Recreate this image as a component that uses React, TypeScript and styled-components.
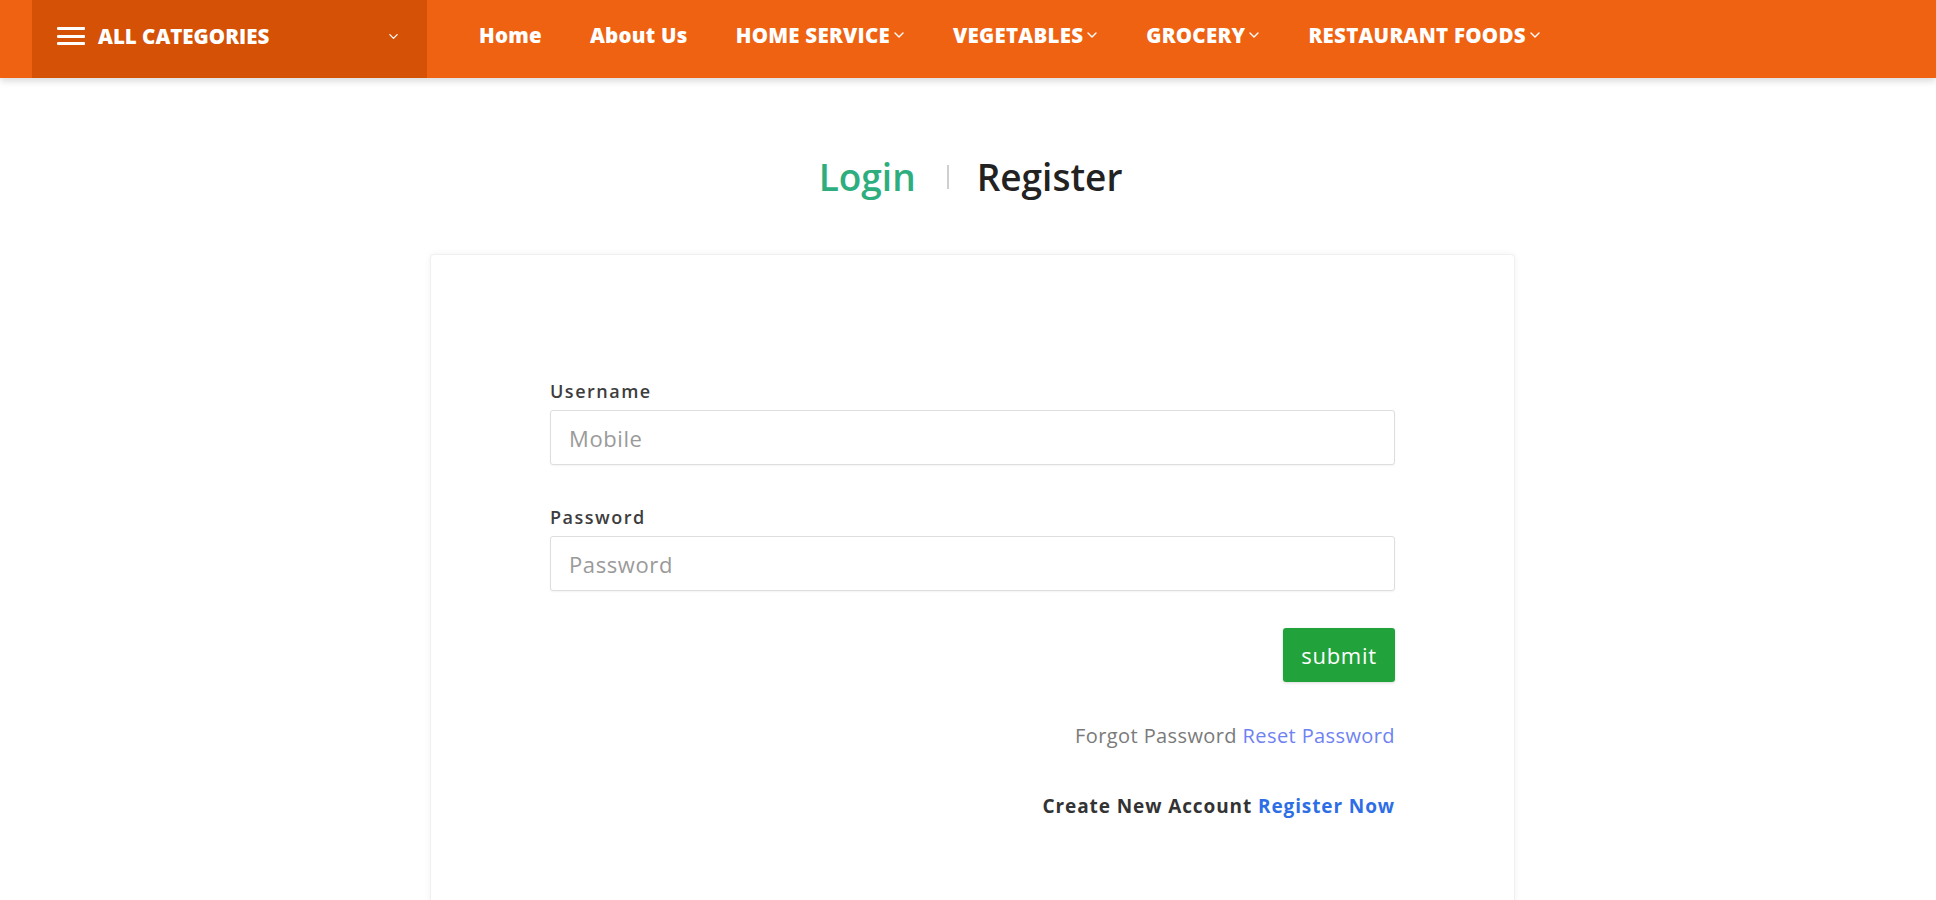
import React from "react";
import styled, { createGlobalStyle } from "styled-components";

const Global = createGlobalStyle`
  html, body { margin: 0; padding: 0; overflow: hidden; background: #ffffff; }
  body { font-family: "Open Sans", "Noto Sans", Arial, sans-serif; }
  * { box-sizing: border-box; }
`;

const Header = styled.header`
  height: 78px;
  background: #ee6212;
  display: flex;
  align-items: stretch;
  padding-left: 32px;
  box-shadow: 0 3px 7px rgba(0, 0, 0, 0.15);
  position: relative;
  z-index: 1;
`;

const CategoryBox = styled.div`
  width: 395px;
  background: #d45106;
  display: flex;
  align-items: center;
  padding: 0 28px 6px 25px;
  color: #fff;
`;

const Burger = styled.span`
  width: 28px;
  height: 18px;
  display: flex;
  flex-direction: column;
  justify-content: space-between;
  & > i {
    display: block;
    height: 3px;
    background: #fff;
    border-radius: 1px;
  }
`;

const CategoryText = styled.span`
  margin-left: 13px;
  font-size: 20.5px;
  font-weight: 800;
  flex: 1;
`;

const Nav = styled.nav`
  display: flex;
  align-items: center;
  gap: 48px;
  margin-left: 52px;
  padding-bottom: 8px;
`;

const NavItem = styled.a`
  display: flex;
  align-items: center;
  gap: 3px;
  color: #fff;
  font-size: 20.5px;
  font-weight: 800;
  letter-spacing: 0.25px;
  text-decoration: none;
  white-space: nowrap;
`;

const Chevron = ({ size = 12 }: { size?: number }) => (
  <svg width={size} height={size} viewBox="0 0 12 12" fill="none">
    <path d="M2 4l4 4 4-4" stroke="#fff" strokeWidth="1.4" strokeLinecap="round" strokeLinejoin="round" />
  </svg>
);

const Main = styled.main`
  display: flex;
  flex-direction: column;
  align-items: center;
  padding-left: 5px;
`;

const Tabs = styled.div`
  margin-top: 77px;
  display: flex;
  align-items: center;
  font-size: 37px;
  font-weight: 600;
  line-height: 43px;
`;

const Tab = styled.span<{ $active?: boolean }>`
  color: ${(p) => (p.$active ? "#2eae7e" : "#222")};
`;

const Sep = styled.span`
  width: 2px;
  height: 24px;
  background: #cfcfcf;
  margin: 0 28px 0 31px;
`;

const Card = styled.section`
  margin-top: 56px;
  margin-left: 4px;
  width: 1085px;
  min-height: 700px;
  background: #fff;
  border: 1px solid #f0f0f0;
  border-radius: 4px;
  box-shadow: 0 0 6px rgba(0, 0, 0, 0.06);
  padding: 125px 119px 80px;
`;

const Field = styled.div`
  display: flex;
  flex-direction: column;
  & + & {
    margin-top: 41px;
  }
`;

const Label = styled.label`
  font-size: 18px;
  font-weight: 600;
  letter-spacing: 1.5px;
  color: #3d3d3d;
  line-height: 22px;
  margin-bottom: 8px;
`;

const Input = styled.input`
  height: 55px;
  border: 1px solid #dedede;
  border-radius: 3px;
  padding: 0 18px;
  font-family: "Open Sans", Arial, sans-serif;
  font-size: 22px;
  letter-spacing: 0.6px;
  color: #444;
  box-shadow: 0 1px 2px rgba(0, 0, 0, 0.05);
  outline: none;
  &::placeholder {
    color: #9a9a9a;
  }
`;

const Actions = styled.div`
  display: flex;
  flex-direction: column;
  align-items: flex-end;
`;

const Submit = styled.button`
  margin-top: 37px;
  width: 112px;
  height: 54px;
  background: #22a23b;
  color: #fff;
  border: none;
  border-radius: 3px;
  font-family: "Open Sans", Arial, sans-serif;
  font-size: 22px;
  letter-spacing: 0.7px;
  box-shadow: 0 1px 3px rgba(0, 0, 0, 0.15);
`;

const Note = styled.p<{ $bold?: boolean }>`
  margin: ${(p) => (p.$bold ? "42px" : "40px")} 0 0;
  font-size: ${(p) => (p.$bold ? "19px" : "20px")};
  font-weight: ${(p) => (p.$bold ? 700 : 400)};
  color: ${(p) => (p.$bold ? "#333" : "#7a7a7a")};
  line-height: 28px;
  letter-spacing: ${(p) => (p.$bold ? "0.9px" : "0.4px")};
`;

const Link = styled.a<{ $bold?: boolean }>`
  color: ${(p) => (p.$bold ? "#2d6ee6" : "#6f82f2")};
  text-decoration: none;
`;

const navItems = [
  { label: "Home" },
  { label: "About Us" },
  { label: "HOME SERVICE", drop: true },
  { label: "VEGETABLES", drop: true },
  { label: "GROCERY", drop: true },
  { label: "RESTAURANT FOODS", drop: true },
];

export default function App() {
  return (
    <>
      <Global />
      <Header>
        <CategoryBox>
          <Burger>
            <i />
            <i />
            <i />
          </Burger>
          <CategoryText>ALL CATEGORIES</CategoryText>
          <Chevron size={11} />
        </CategoryBox>
        <Nav>
          {navItems.map((n) => (
            <NavItem key={n.label} href="#">
              {n.label}
              {n.drop && <Chevron size={12} />}
            </NavItem>
          ))}
        </Nav>
      </Header>
      <Main>
        <Tabs>
          <Tab $active>Login</Tab>
          <Sep />
          <Tab>Register</Tab>
        </Tabs>
        <Card>
          <Field>
            <Label>Username</Label>
            <Input placeholder="Mobile" />
          </Field>
          <Field>
            <Label>Password</Label>
            <Input type="password" placeholder="Password" />
          </Field>
          <Actions>
            <Submit>submit</Submit>
            <Note>
              Forgot Password <Link href="#">Reset Password</Link>
            </Note>
            <Note $bold>
              Create New Account <Link $bold href="#">Register Now</Link>
            </Note>
          </Actions>
        </Card>
      </Main>
    </>
  );
}
